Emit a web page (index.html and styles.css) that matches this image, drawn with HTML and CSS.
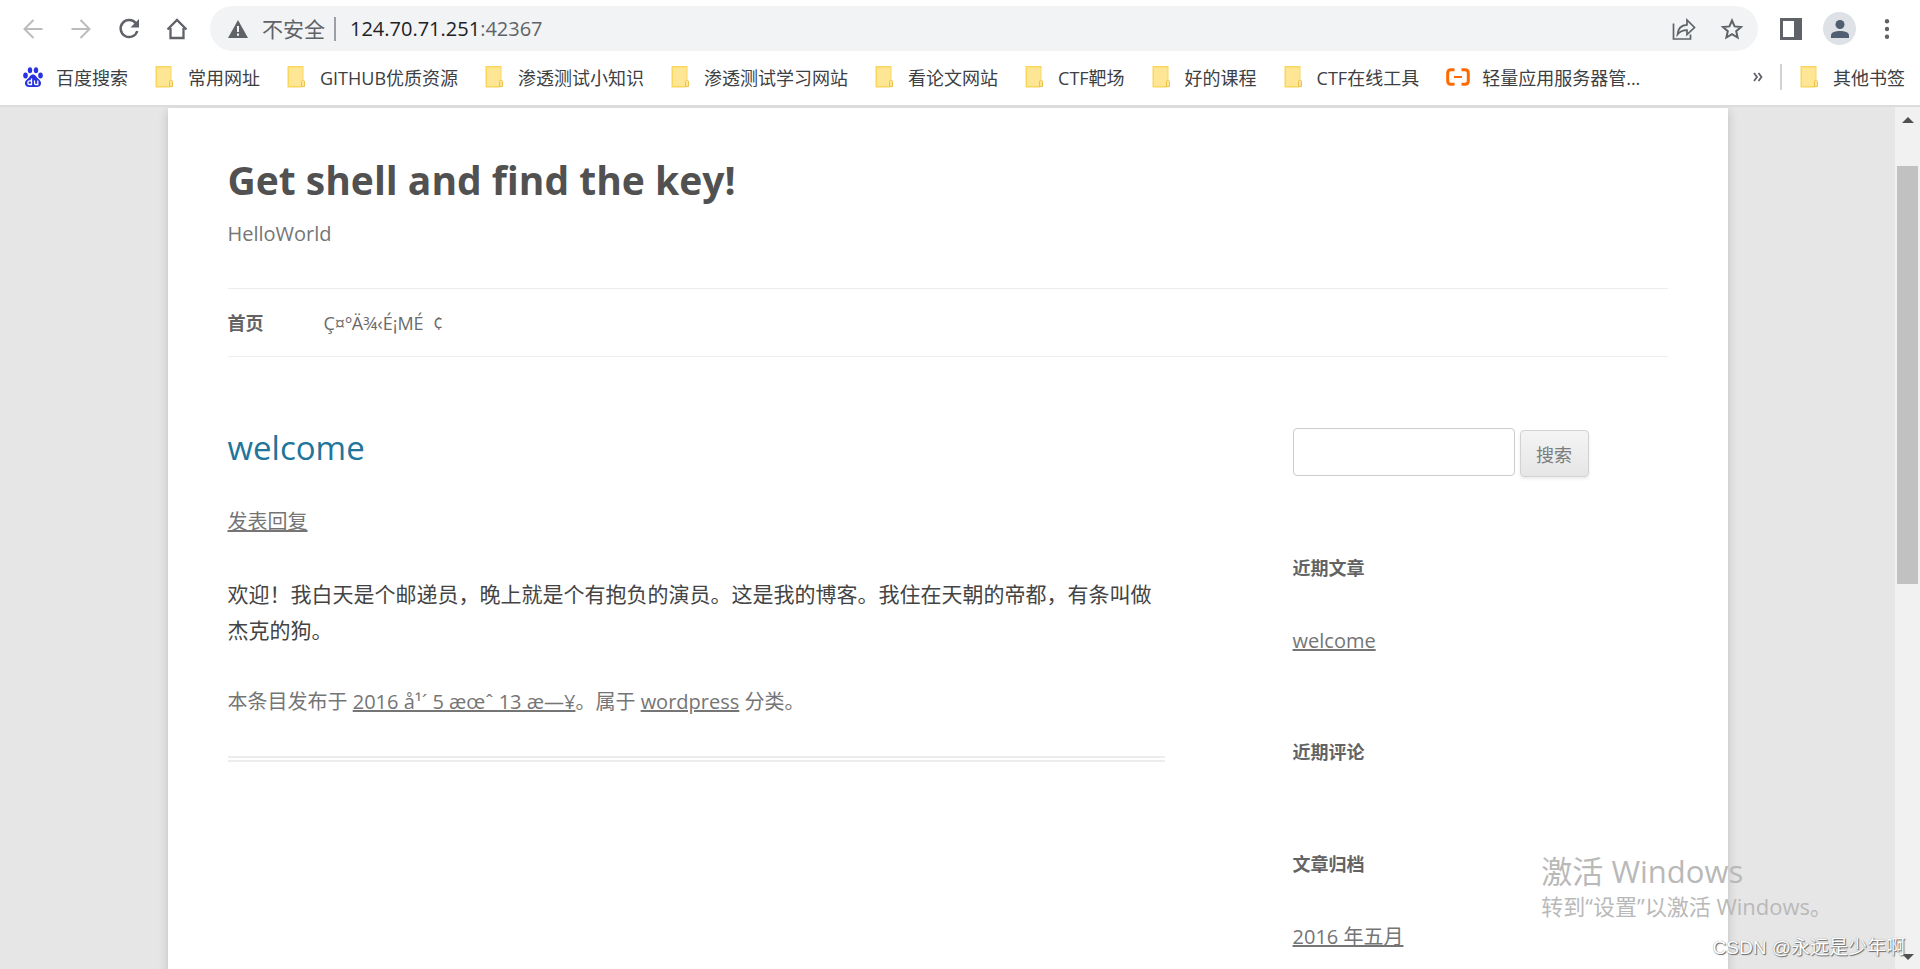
FILE: index.html
```
<!DOCTYPE html>
<html lang="zh-CN">
<head>
    <meta charset="UTF-8">
    <meta name="viewport" content="width=device-width, initial-scale=1.0">
    <title>Get shell and find the key!</title>
    <link rel="stylesheet" href="styles.css">
</head>
<body>

<!-- folder icon shared by the bookmarks -->
<svg class="defs" width="0" height="0">
    <symbol id="folder" viewBox="0 0 18 22">
        <path d="M1 1h15v14h1.500v6H1z" fill="#ffe694"/>
        <path d="M.500 0h16v1.500H2V20h13v1.500H.500z" fill="#fbd65c"/>
        <path d="M16 1v13" stroke="#fbd65c"/>
        <path d="M14.500 20.500v-5q0-1 1-1h1q1 0 1 1v5z" fill="#ffe694" stroke="#edc24a"/>
    </symbol>
</svg>

<header class="browser">
    <div class="toolbar">
        <div class="nav-buttons">
            <button class="icon-btn disabled" aria-label="后退"><svg width="20" height="20" viewBox="0 0 20 20"><path d="M19.500 10H2M10.500 1 1.500 10l9 9" fill="none" stroke="currentColor" stroke-width="2"/></svg></button>
            <button class="icon-btn disabled" aria-label="前进"><svg width="20" height="20" viewBox="0 0 20 20"><path d="M.500 10H18M9.500 1l9 9-9 9" fill="none" stroke="currentColor" stroke-width="2"/></svg></button>
            <button class="icon-btn" aria-label="刷新"><svg width="22" height="22" viewBox="0 0 22 22"><path d="M18 5.500A8.500 8.500 0 1 0 19.300 13" fill="none" stroke="currentColor" stroke-width="2.500"/><path d="M21 1v8.500h-8.500z" fill="currentColor"/></svg></button>
            <button class="icon-btn" aria-label="主页"><svg width="22" height="22" viewBox="0 0 22 22"><path d="M1.500 11.500 11 2l9.500 9.500M4.500 10v10h13V10" fill="none" stroke="currentColor" stroke-width="2.300"/></svg></button>
        </div>
        <div class="omnibox">
            <svg width="20" height="18" viewBox="0 0 20 18"><path d="M10 0 20 18H0z" fill="#5f6368"/><path d="M10 6v6M10 13.500v2.200" stroke="#f1f3f4" stroke-width="2"/></svg>
            <span class="insecure">不安全</span>
            <span class="url"><b>124.70.71.251</b>:42367</span>
            <button class="icon-btn share" aria-label="分享"><svg width="24" height="24" viewBox="0 0 24 24"><path d="M1.500 6.500V22h17v-4.500" fill="none" stroke="currentColor" stroke-width="1.700"/><path d="M5.500 17.500c.500-6 4-9.500 9.500-9.700V3l7.500 7.500L15 17.500v-4.300c-4.500 0-7 1-9.500 4.300z" fill="none" stroke="currentColor" stroke-width="1.700"/></svg></button>
            <button class="icon-btn" aria-label="收藏"><svg width="24" height="24" viewBox="0 0 24 24"><path d="m12 3.500 2.600 5.900 6.400.600-4.800 4.200 1.400 6.300-5.600-3.300-5.600 3.300 1.400-6.300L3 10l6.400-.600z" fill="none" stroke="currentColor" stroke-width="2"/></svg></button>
        </div>
        <div class="tools">
            <button class="icon-btn" aria-label="侧边栏"><svg width="22" height="22" viewBox="0 0 22 22"><path d="M0 0h22v22H0zM3 3v16h11V3z" fill="currentColor" fill-rule="evenodd"/></svg></button>
            <button class="icon-btn avatar" aria-label="用户"><svg width="20" height="20" viewBox="0 0 20 20"><circle cx="10" cy="5.500" r="4.500" fill="#515d70"/><path d="M1 19v-2.500C1 13 6 12 10 12s9 1 9 4.500V19z" fill="#515d70"/></svg></button>
            <button class="icon-btn" aria-label="菜单"><svg width="6" height="20" viewBox="0 0 6 20"><g fill="currentColor"><circle cx="3" cy="2.300" r="2.200"/><circle cx="3" cy="10" r="2.200"/><circle cx="3" cy="17.700" r="2.200"/></g></svg></button>
        </div>
    </div>

    <nav class="bookmarks">
        <a href="#" class="baidu"><svg width="20" height="20" viewBox="0 0 20 20"><g fill="#2932e1"><ellipse cx="2.500" cy="8.500" rx="2.300" ry="3"/><ellipse cx="7" cy="3.200" rx="2.200" ry="3"/><ellipse cx="13" cy="3.200" rx="2.200" ry="3"/><ellipse cx="17.500" cy="8.500" rx="2.300" ry="3"/><path d="M10 7.500c2.500 0 3.300 2.500 5 4 2 1.700 3.300 3 3 5.300-.300 2.200-2 3.200-4 3.200H6c-2 0-3.700-1-4-3.200-.300-2.300 1-3.600 3-5.300 1.700-1.500 2.500-4 5-4z"/></g><path d="M8.500 11.500v6H6.700a1.700 1.700 0 0 1 0-3.700h1.800M11.500 13.500v2.700q0 1.300 1.300 1.300h2v-4" fill="none" stroke="#fff" stroke-width="1.300"/></svg>百度搜索</a>
        <a href="#"><svg width="18" height="22"><use href="#folder"/></svg>常用网址</a>
        <a href="#"><svg width="18" height="22"><use href="#folder"/></svg>GITHUB优质资源</a>
        <a href="#"><svg width="18" height="22"><use href="#folder"/></svg>渗透测试小知识</a>
        <a href="#"><svg width="18" height="22"><use href="#folder"/></svg>渗透测试学习网站</a>
        <a href="#"><svg width="18" height="22"><use href="#folder"/></svg>看论文网站</a>
        <a href="#"><svg width="18" height="22"><use href="#folder"/></svg>CTF靶场</a>
        <a href="#"><svg width="18" height="22"><use href="#folder"/></svg>好的课程</a>
        <a href="#"><svg width="18" height="22"><use href="#folder"/></svg>CTF在线工具</a>
        <a href="#" class="aliyun"><svg width="24" height="18" viewBox="0 0 24 18"><path d="M8.500 1.700H5Q1.700 1.700 1.700 5v8q0 3.300 3.300 3.300h3.500M15.500 1.700H19q3.300 0 3.300 3.300v8q0 3.300-3.300 3.300h-3.500" fill="none" stroke="#ff6a00" stroke-width="3"/><path d="M8 9h8" stroke="#ff6a00" stroke-width="2"/></svg>轻量应用服务器管...</a>
        <button class="more" aria-label="更多书签"><svg width="10" height="10" viewBox="0 0 10 10"><path d="m1 1 3 4-3 4M5.500 1l3 4-3 4" fill="none" stroke="#5f6368" stroke-width="1.800"/></svg></button>
        <a href="#" class="other"><svg width="18" height="22"><use href="#folder"/></svg>其他书签</a>
    </nav>
</header>

<div class="viewport">
    <div class="site">
        <div class="page">
            <header class="site-header">
                <h1><a href="#">Get shell and find the key!</a></h1>
                <h2>HelloWorld</h2>
            </header>
            <nav class="main-nav">
                <a href="#" class="current">首页</a>
                <a href="#">Ç¤ºÄ¾‹É¡MÉ  ¢</a>
            </nav>

            <div class="columns">
                <main class="primary">
                    <article>
                        <h2 class="entry-title"><a href="#">welcome</a></h2>
                        <p class="meta"><a href="#">发表回复</a></p>
                        <p class="entry">欢迎！我白天是个邮递员，晚上就是个有抱负的演员。这是我的博客。我住在天朝的帝都，有条叫做杰克的狗。</p>
                        <p class="meta">本条目发布于 <a href="#">2016 å¹´ 5 æœˆ 13 æ—¥</a>。属于 <a href="#">wordpress</a> 分类。</p>
                    </article>
                </main>

                <aside class="sidebar">
                    <form class="search">
                        <input type="text" aria-label="搜索">
                        <button type="button">搜索</button>
                    </form>
                    <section class="widget">
                        <h3>近期文章</h3>
                        <ul><li><a href="#">welcome</a></li></ul>
                    </section>
                    <section class="widget">
                        <h3>近期评论</h3>
                        <ul></ul>
                    </section>
                    <section class="widget">
                        <h3>文章归档</h3>
                        <ul><li><a href="#">2016 年五月</a></li></ul>
                    </section>
                </aside>
            </div>
        </div>
    </div>

    <div class="scrollbar">
        <svg width="12" height="6" viewBox="0 0 12 6"><path d="M6 0l6 6H0z" fill="#505050"/></svg>
        <div class="track"><div class="thumb"></div></div>
        <svg width="12" height="6" viewBox="0 0 12 6"><path d="M0 0h12L6 6z" fill="#505050"/></svg>
    </div>
</div>

<div class="activate">
    <p class="activate-title">激活 Windows</p>
    <p>转到“设置”以激活 Windows。</p>
</div>
<div class="watermark">CSDN @永远是少年啊</div>

</body>
</html>
```
FILE: styles.css
```
* {
    box-sizing: border-box;
}

body {
    margin: 0;
    height: 100vh;
    display: flex;
    flex-direction: column;
    overflow: hidden;
    font-family: "Open Sans", "Noto Sans CJK SC", sans-serif;
    color: #444;
}

h1, h2, h3, p, ul {
    margin: 0;
    padding: 0;
    font-weight: normal;
}

ul {
    list-style: none;
}

svg {
    display: block;
    flex: none;
}

.defs {
    position: absolute;
}

/* browser bar */
.browser {
    flex: none;
    background: #fff;
    border-bottom: 2px solid #dcdcdc;
}

.toolbar {
    display: flex;
    align-items: center;
    height: 57px;
    padding: 0 30px 0 17px;
}

.nav-buttons {
    display: flex;
    gap: 16px;
    margin-right: 17px;
}

.icon-btn {
    display: flex;
    align-items: center;
    justify-content: center;
    width: 32px;
    height: 32px;
    padding: 0;
    border: 0;
    background: none;
    color: #5f6368;
}

.disabled {
    color: #babcbe;
}

.omnibox {
    flex: 1;
    display: flex;
    align-items: center;
    height: 45px;
    padding: 0 10px 0 18px;
    border-radius: 23px;
    background: #f1f3f4;
}

.insecure {
    margin-left: 14px;
    padding-right: 9px;
    border-right: 2px solid #9aa0a6;
    font-size: 21px;
    line-height: 24px;
    color: #5f6368;
}

.url {
    margin-left: 14px;
    font-size: 20px;
    color: #5f6368;
}

.url b {
    font-weight: normal;
    color: #202124;
}

.share {
    margin: 0 16px 0 auto;
}

.tools {
    display: flex;
    align-items: center;
    gap: 16px;
    margin-left: 17px;
}

.tools .icon-btn:last-child {
    width: 6px;
    margin-left: 12px;
}

.tools .avatar {
    width: 33px;
    height: 33px;
    border-radius: 50%;
    background: #dee1e6;
}

.bookmarks {
    display: flex;
    align-items: center;
    gap: 27px;
    height: 48px;
    padding: 0 15px 8px 23px;
    font-size: 18px;
    white-space: nowrap;
}

.bookmarks a {
    display: flex;
    align-items: center;
    gap: 15px;
    color: #3c4043;
    text-decoration: none;
}

.bookmarks .baidu {
    gap: 13px;
}

.bookmarks .aliyun {
    gap: 12px;
}

.more {
    margin-left: auto;
    margin-right: -10px;
    padding: 0;
    border: 0;
    background: none;
}

.bookmarks .other {
    padding-left: 18px;
    border-left: 2px solid #d0d2d5;
}

/* blog */
.viewport {
    flex: 1;
    display: flex;
    min-height: 0;
    background: #e6e6e6;
}

.site {
    flex: 1;
    overflow: hidden;
}

.page {
    max-width: 1560px;
    min-height: 100%;
    margin: 1px auto 0;
    padding: 0 60px;
    background: #fff;
    box-shadow: 0 3px 9px rgba(100, 100, 100, 0.3);
}

.site-header {
    padding: 40px 0 32px;
}

.site-header h1 {
    font-size: 39px;
    font-weight: bold;
    line-height: 63px;
}

.site-header a {
    color: #515151;
    text-decoration: none;
}

.site-header h2 {
    font-size: 20px;
    line-height: 45px;
    color: #757575;
}

.main-nav {
    display: flex;
    gap: 60px;
    padding-top: 2px;
    border-top: 1px solid #ededed;
    border-bottom: 1px solid #ededed;
    font-size: 18px;
    line-height: 65px;
}

.main-nav a {
    color: #6a6a6a;
    text-decoration: none;
    white-space: pre;
}

.main-nav .current {
    color: #636363;
    font-weight: bold;
}

.columns {
    display: flex;
    justify-content: space-between;
    padding-top: 71px;
}

.primary {
    width: 65.1%;
}

article {
    padding-bottom: 36px;
    border-bottom: 6px double #ededed;
}

.entry-title {
    font-size: 33px;
    line-height: 40px;
}

.entry-title a {
    color: #21759b;
    text-decoration: none;
}

.meta {
    font-size: 20px;
    line-height: 36px;
    color: #757575;
}

.entry-title + .meta {
    margin-top: 36px;
}

.meta a,
.widget a {
    color: #757575;
}

.entry {
    margin: 36px 0;
    font-size: 21px;
    line-height: 36px;
}

.sidebar {
    width: 26.04%;
}

.search {
    display: flex;
    align-items: flex-end;
    gap: 5px;
    margin-bottom: 73px;
}

.search input {
    width: 222px;
    height: 48px;
    padding: 9px;
    border: 1px solid #ccc;
    border-radius: 4px;
    font: inherit;
}

.search button {
    width: 69px;
    height: 47px;
    margin-bottom: -1px;
    padding: 0;
    border: 1px solid #d2d2d2;
    border-radius: 4px;
    background: linear-gradient(#f4f4f4, #e6e6e6);
    box-shadow: 0 2px 3px rgba(64, 64, 64, 0.1);
    font-family: inherit;
    font-size: 18px;
    color: #7c7c7c;
}

.widget {
    margin-bottom: 74px;
}

.widget h3 {
    margin-bottom: 36px;
    font-size: 18px;
    font-weight: bold;
    line-height: 38px;
    color: #636363;
}

.widget li {
    font-size: 20px;
    line-height: 36px;
}

.scrollbar {
    width: 25px;
    display: flex;
    flex-direction: column;
    align-items: center;
    padding: 10px 0 9px;
    background: #f1f1f1;
}

.track {
    flex: 1;
    width: 21px;
    padding: 43px 0 0;
}

.thumb {
    height: 53%;
    background: #c1c1c1;
}

/* overlays */
.activate {
    position: absolute;
    right: 88px;
    bottom: 48px;
    font-size: 22px;
    line-height: 30px;
    color: #b9b9b9;
}

.activate-title {
    font-size: 31px;
    line-height: 40px;
}

.watermark {
    position: absolute;
    right: 15px;
    bottom: 6px;
    font-family: "Liberation Sans", "Noto Sans CJK SC", sans-serif;
    font-size: 19px;
    line-height: 30px;
    color: #fff;
    text-shadow: 1px 1px 1px #666, 0 0 1px #888;
}
```
